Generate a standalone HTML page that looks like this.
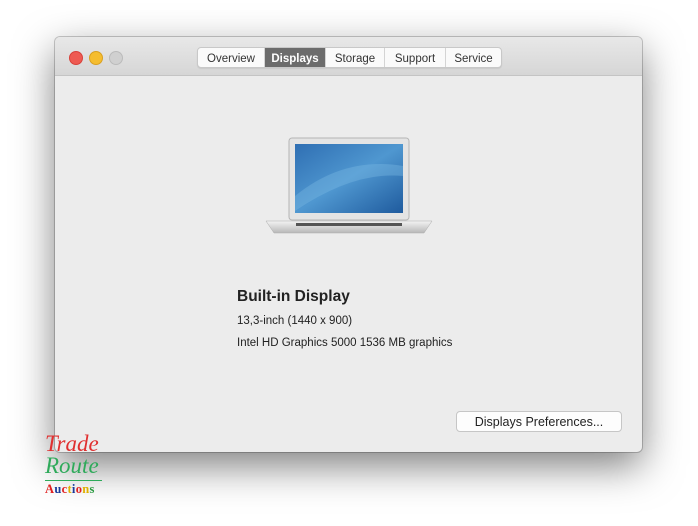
<!DOCTYPE html>
<html><head><style>
body{margin:0;width:698px;height:526px;background:#fff;position:relative;overflow:hidden;font-family:"Liberation Sans",sans-serif;}
.win{position:absolute;left:55px;top:37px;width:587px;height:415px;background:#ececec;border-radius:5px;box-shadow:0 14px 40px rgba(0,0,0,.5),0 0 0 1px rgba(0,0,0,.2);overflow:hidden;}
.tb{position:absolute;left:0;top:0;width:100%;height:38px;background:linear-gradient(#e8e8e8,#d6d6d6);border-bottom:1px solid #c4c4c4;}
.dot{position:absolute;top:14px;width:12px;height:12px;border-radius:50%;}
.tabs{position:absolute;left:142px;top:10px;height:19px;display:flex;border:1px solid #c8c8c8;border-radius:4px;background:#fafafa;overflow:hidden;font-size:11.5px;color:#333;box-shadow:0 1px 1px rgba(0,0,0,.08)}
.tabs div{line-height:20px;padding-top:1px;height:18px;text-align:center;border-left:1px solid #d4d4d4}
.tabs div:first-child{border-left:none}
.tabs .a{background:#6c6c6c;color:#fff;font-weight:bold}
.t{position:absolute;color:#222}
.btn{position:absolute;left:401px;top:374px;width:164px;height:19px;background:#fdfdfd;border:1px solid #c6c6c6;border-radius:4px;font-size:12.5px;text-align:center;line-height:20px;color:#222;}
</style></head><body>
<div class="win">
<div class="tb">
<div class="dot" style="left:14px;background:#ee5a52;border:0.5px solid #d8413a"></div>
<div class="dot" style="left:34px;background:#f5bd2f;border:0.5px solid #d9a021"></div>
<div class="dot" style="left:54px;background:#d0d0d0;border:0.5px solid #bbb"></div>
<div class="tabs">
<div style="width:66px">Overview</div><div class="a" style="width:60px">Displays</div><div style="width:58px">Storage</div><div style="width:60px">Support</div><div style="width:55px">Service</div>
</div>
</div>
<svg style="position:absolute;left:209px;top:99px" width="170" height="100" viewBox="0 0 170 100">
<defs><linearGradient id="s" x1="0" y1="0" x2="1" y2="1"><stop offset="0" stop-color="#2f6fb3"/><stop offset=".5" stop-color="#4f97d0"/><stop offset="1" stop-color="#1f5b9e"/></linearGradient>
<linearGradient id="b" x1="0" y1="0" x2="0" y2="1"><stop offset="0" stop-color="#f4f4f4"/><stop offset="1" stop-color="#b8b8b8"/></linearGradient></defs>
<rect x="25" y="2" width="120" height="82" rx="3" fill="#e4e4e4" stroke="#b5b5b5"/>
<rect x="31" y="8" width="108" height="69" fill="url(#s)"/>
<path d="M31 60 Q80 20 139 30 L139 40 Q90 35 31 75Z" fill="#7ab8e4" opacity=".4"/>
<path d="M2 85 L168 85 L160 97 L10 97Z" fill="url(#b)" stroke="#aaa" stroke-width=".5"/>
<rect x="32" y="87" width="106" height="3" fill="#555"/>
</svg>
<div class="t" style="left:182px;top:251px;font-size:15.5px;font-weight:bold">Built-in Display</div>
<div class="t" style="left:182px;top:278px;font-size:11.5px">13,3-inch (1440 x 900)</div>
<div class="t" style="left:182px;top:300px;font-size:11.5px">Intel HD Graphics 5000 1536 MB graphics</div>
<div class="btn">Displays Preferences...</div>
</div>
<div style="position:absolute;left:45px;top:434px;font-family:'Liberation Serif',serif;font-style:italic;font-size:23px;line-height:20px;color:#e03030">Trade</div>
<div style="position:absolute;left:45px;top:456px;font-family:'Liberation Serif',serif;font-style:italic;font-size:23px;line-height:20px;color:#2eaa5a">Route</div>
<div style="position:absolute;left:45px;top:480px;width:57px;height:1px;background:#2eaa5a"></div>
<div style="position:absolute;left:45px;top:482px;font-family:'Liberation Serif',serif;font-weight:bold;font-size:12.5px;letter-spacing:.3px"><span style="color:#e02020">A</span><span style="color:#1a3a9a">u</span><span style="color:#e02020">c</span><span style="color:#e0b000">t</span><span style="color:#1a3a9a">i</span><span style="color:#e02020">o</span><span style="color:#e0b000">n</span><span style="color:#2a9a40">s</span></div>
</body></html>
